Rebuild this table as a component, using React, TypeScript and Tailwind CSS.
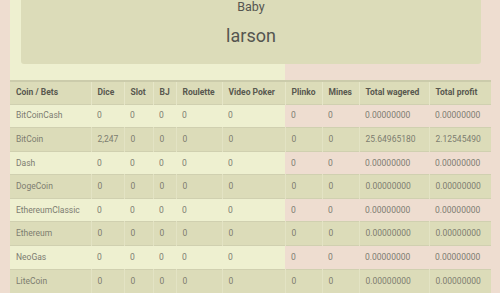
import React from 'react';

const columns = [
  { label: 'Coin / Bets', w: 'w-[81px]' },
  { label: 'Dice', w: 'w-[33px]' },
  { label: 'Slot', w: 'w-[29px]' },
  { label: 'BJ', w: 'w-[23px]' },
  { label: 'Roulette', w: 'w-[46px]' },
  { label: 'Video Poker', w: 'w-[63px]' },
  { label: 'Plinko', w: 'w-[37px]' },
  { label: 'Mines', w: 'w-[37px]' },
  { label: 'Total wagered', w: 'w-[70px]' },
  { label: 'Total profit', w: 'w-[62px]' },
];

const rows = [
  ['BitCoinCash', '0', '0', '0', '0', '0', '0', '0', '0.00000000', '0.00000000'],
  ['BitCoin', '2,247', '0', '0', '0', '0', '0', '0', '25.64965180', '2.12545490'],
  ['Dash', '0', '0', '0', '0', '0', '0', '0', '0.00000000', '0.00000000'],
  ['DogeCoin', '0', '0', '0', '0', '0', '0', '0', '0.00000000', '0.00000000'],
  ['EthereumClassic', '0', '0', '0', '0', '0', '0', '0', '0.00000000', '0.00000000'],
  ['Ethereum', '0', '0', '0', '0', '0', '0', '0', '0.00000000', '0.00000000'],
  ['NeoGas', '0', '0', '0', '0', '0', '0', '0', '0.00000000', '0.00000000'],
  ['LiteCoin', '0', '0', '0', '0', '0', '0', '0', '0.00000000', '0.00000000'],
];

const App: React.FC = () => {
  return (
    <div className="min-h-screen bg-[#eeddd0] px-[10px] font-['Roboto','Liberation_Sans',sans-serif] overflow-hidden">
      {/* left column, content spills past it */}
      <div className="w-[275px] min-h-screen bg-[#eef0d0]">
        {/* user card */}
        <div className="ml-[11px] w-[460px] h-[64px] bg-[#dcdcb9] rounded-b-[3px] flex flex-col items-center text-[#555550]">
          <div className="text-[12.5px] leading-[13px]">Baby</div>
          <div className="text-[18px] leading-[20px] mt-[13px]">larson</div>
        </div>

        {/* stats table */}
        <table className="mt-[16px] w-[481px] table-fixed border-collapse text-[8.5px] border-t-2 border-[#cbcbab]">
          <thead>
            <tr className="bg-[#dcdcb9]">
              {columns.map((c, i) => (
                <th
                  key={c.label}
                  className={`${c.w} h-[23px] px-[6px] text-left font-bold text-[#58584f] whitespace-nowrap ${i > 0 ? 'border-l border-[#e6e6c8]' : ''}`}
                >
                  {c.label}
                </th>
              ))}
            </tr>
          </thead>
          <tbody>
            {rows.map((r, ri) => (
              <tr key={r[0]} className={`border-t border-[#d0d0b0] ${ri % 2 === 1 ? 'bg-[#dcdcb9]' : ''}`}>
                {r.map((v, ci) => (
                  <td
                    key={ci}
                    className={`h-[23.6px] px-[6px] text-[#7c7c70] whitespace-nowrap ${ci > 0 && ri % 2 === 1 ? 'border-l border-[#e3e3c4]' : ''}`}
                  >
                    {v}
                  </td>
                ))}
              </tr>
            ))}
          </tbody>
        </table>
      </div>
    </div>
  );
};

export default App;
